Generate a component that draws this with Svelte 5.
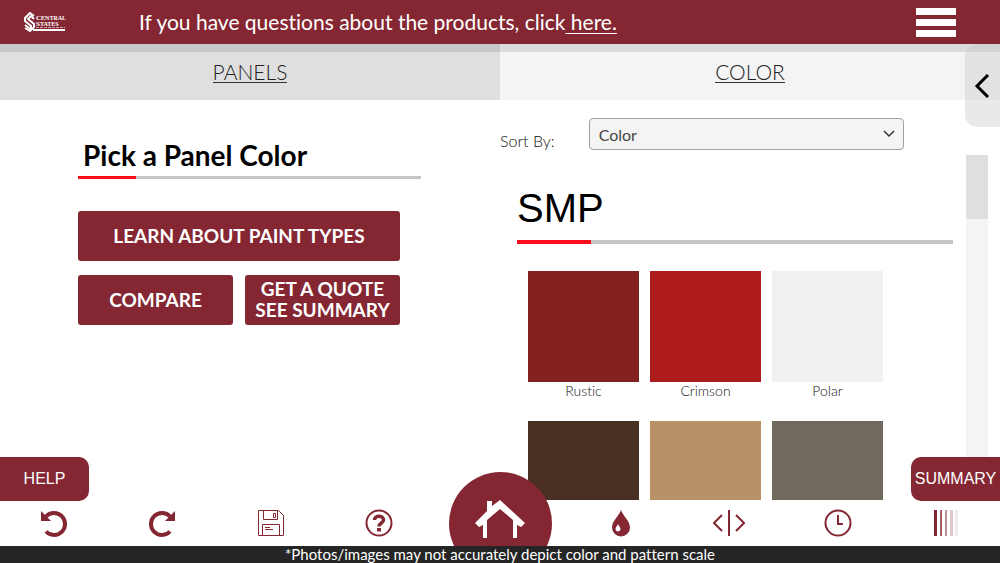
<script>
	const swatches = [
		{ id: "rustic", caption: "Rustic", color: "#832120" },
		{ id: "crimson", caption: "Crimson", color: "#ad1c1b" },
		{ id: "polar", caption: "Polar", color: "#f1f1f1" },
		{ id: "brown", color: "#493022" },
		{ id: "tan", color: "#b89167" },
		{ id: "taupe", color: "#71695e" },
	];

	let sortBy = $state("Color");
	let tab = $state("color");
</script>

<div class="page">
	<header>
		<svg class="logo" viewBox="0 0 42 20" role="img" aria-label="Central States">
			<g fill="none" stroke="#fff" stroke-width="2">
				<path d="M10 4 6 1 1 6v3l6 5v2l-1 1-5-4" />
				<path d="M10 7 7 4 4 7l6 5v3l-4 4-5-3" />
			</g>
			<text x="12" y="8" class="logo-name">C<tspan class="small">ENTRAL</tspan></text>
			<text x="12" y="14" class="logo-name">S<tspan class="small">TATES</tspan></text>
			<path d="M12 15.5h29" stroke="#fff" stroke-opacity=".6" stroke-dasharray="3 1" />
			<path d="M9 18h32" stroke="#fff" stroke-width="2" />
		</svg>
		<p>If you have questions about the products, click<a href="#contact">&nbsp;here.</a></p>
		<button class="menu" aria-label="Menu">
			<span></span>
			<span></span>
			<span></span>
		</button>
	</header>

	<nav class="tabs">
		<button aria-pressed={tab === "panels"} onclick={() => (tab = "panels")}><span>PANELS</span></button>
		<button class="light" aria-pressed={tab === "color"} onclick={() => (tab = "color")}><span>COLOR</span></button>
		<button class="drawer" aria-label="Open drawer">
			<svg width="16" height="24" viewBox="0 0 16 24">
				<path d="M14 1 3 12l11 11" fill="none" stroke="#000" stroke-width="3" />
			</svg>
		</button>
	</nav>

	<main>
		<section class="intro">
			<h1>Pick a Panel Color</h1>
			<div class="rule"></div>
			<div class="actions">
				<button class="wide">LEARN ABOUT PAINT TYPES</button>
				<button>COMPARE</button>
				<button>GET A QUOTE<br />SEE SUMMARY</button>
			</div>
		</section>

		<section class="picker">
			<div class="sort">
				<label for="sort">Sort By:</label>
				<div class="select">
					<select id="sort" bind:value={sortBy}>
						<option>Color</option>
						<option>Name</option>
					</select>
					<svg width="12" height="8" viewBox="0 0 12 8">
						<path d="m1 1 5 5 5-5" fill="none" stroke="#333" stroke-width="1.5" />
					</svg>
				</div>
			</div>
			<div class="scroller">
				<div class="list">
					<h2>SMP</h2>
					<div class="rule thick"></div>
					<div class="swatches">
						{#each swatches as swatch (swatch.id)}
							<button class="swatch" aria-label={swatch.id}>
								<span class="chip" style:background-color={swatch.color}></span>
								{#if swatch.caption}
									{swatch.caption}
								{/if}
							</button>
						{/each}
					</div>
				</div>
				<div class="track"><div class="thumb"></div></div>
			</div>
		</section>

		<button class="side help">HELP</button>
		<button class="side summary">SUMMARY</button>
	</main>

	<footer>
		<div class="toolbar">
			<button aria-label="Undo">
				<svg width="28" height="28" viewBox="0 0 28 28">
					<path d="M6 7.500A11 11 0 1 1 6 22.500" fill="none" stroke="#842733" stroke-width="4" />
					<path d="M1 2v10h10z" fill="#842733" />
				</svg>
			</button>
			<button aria-label="Redo">
				<svg class="flip" width="28" height="28" viewBox="0 0 28 28">
					<path d="M6 7.500A11 11 0 1 1 6 22.500" fill="none" stroke="#842733" stroke-width="4" />
					<path d="M1 2v10h10z" fill="#842733" />
				</svg>
			</button>
			<button aria-label="Save">
				<svg width="26" height="26" viewBox="0 0 26 26" fill="none" stroke="#842733">
					<path d="M.5.5h20l5 5v20H.5zM5.500 1v8.500h14V1M4.500 25V14.500h17V25" />
					<path d="M15.500 3.500h2v4h-2zM7 17.500h5M7 19.500h8" />
				</svg>
			</button>
			<button aria-label="Questions">
				<svg width="28" height="28" viewBox="0 0 28 28" fill="none" stroke="#842733">
					<circle cx="14" cy="14" r="12.500" stroke-width="2" />
					<path d="M9.500 11c0-5 9-5 9 0 0 3-4.500 3-4.500 6.500" stroke-width="3.500" />
					<path d="M14 19v3.500" stroke-width="4" />
				</svg>
			</button>
			<button class="home" aria-label="Home">
				<svg width="50" height="40" viewBox="0 0 50 40" fill="#fff">
					<path d="M12 12V2h5v5l8-6 25 23-4 4-4-2v13h-4V21L25 10 12 21v18H8V26l-4 2-4-4z" />
				</svg>
			</button>
			<button aria-label="Finish">
				<svg width="20" height="28" viewBox="0 0 20 28">
					<path d="M10 1c2 6 9 11 9 17.500a9 9 0 0 1-18 0C1 12 8 7 10 1z" fill="#842733" />
					<path d="M7 15c.5 2 2.500 3 2.500 5a2.500 2.500 0 0 1-5 0c0-2 2-3 2.500-5z" fill="#fff" />
				</svg>
			</button>
			<button aria-label="Compare views">
				<svg width="32" height="28" viewBox="0 0 32 28" fill="none" stroke="#842733" stroke-width="2">
					<path d="m9 6-8 8 8 8M16 1v26M23 6l8 8-8 8" />
				</svg>
			</button>
			<button aria-label="History">
				<svg width="28" height="28" viewBox="0 0 28 28" fill="none" stroke="#842733" stroke-width="2">
					<circle cx="14" cy="14" r="12.500" />
					<path d="M14 6v9h5" />
				</svg>
			</button>
			<button aria-label="Opacity">
				<svg width="26" height="28" viewBox="0 0 26 28" fill="#842733">
					<path d="M1 1h3v26H1z" />
					<path d="M7 1h2v26H7z" opacity=".75" />
					<path d="M12 1h2v26h-2z" opacity=".5" />
					<path d="M17 1h3v26h-3z" opacity=".25" />
					<path d="M22 1h3v26h-3z" opacity=".1" />
				</svg>
			</button>
		</div>
		<p class="disclaimer">*Photos/images may not accurately depict color and pattern scale</p>
	</footer>
</div>

<style>
	:global(body) {
		margin: 0;
	}

	* {
		box-sizing: border-box;
		font-variant-ligatures: none;
	}

	.page {
		height: 100vh;
		display: flex;
		flex-direction: column;
		overflow: hidden;
		background-color: #fff;
		color: #222;
		font-family: Lato, sans-serif;
	}

	button {
		padding: 0;
		border: none;
		background-color: transparent;
		color: inherit;
		font-family: inherit;
		cursor: pointer;
	}

	svg {
		display: block;
	}

	h1, h2, p {
		margin: 0;
	}

	header {
		height: 44px;
		flex: none;
		display: flex;
		align-items: center;
		padding: 0 44px 0 24px;
		background-color: #842733;
		color: #fff;
	}

	header p {
		flex: 1;
		margin-left: 73px;
		padding-bottom: 2px;
		font-size: 21px;
	}

	header a {
		color: inherit;
		text-decoration-thickness: 1px;
		text-underline-offset: 3px;
	}

	.logo {
		width: 42px;
		height: 20px;
	}

	.logo-name {
		fill: #fff;
		font: bold 7px "Liberation Serif", serif;
	}

	.small {
		font-size: 6px;
	}

	.menu {
		width: 40px;
		display: grid;
		gap: 4px;
	}

	.menu span {
		height: 7px;
		background-color: #fff;
	}

	.tabs {
		position: relative;
		flex: none;
		display: grid;
		grid-template-columns: 1fr 1fr;
	}

	.tabs button {
		height: 56px;
		padding-bottom: 10px;
		border-top: 8px solid #c7c8c8;
		background-color: #dfdfdf;
		font-size: 21px;
		font-weight: 300;
	}

	.tabs .light {
		border-color: #dadbdb;
		background-color: #f4f4f4;
	}

	.tabs span {
		display: inline-block;
		border-bottom: 1px solid #333;
		line-height: 21px;
	}

	.tabs .drawer {
		position: absolute;
		top: 0;
		right: 0;
		z-index: 1;
		width: 35px;
		height: 83px;
		display: flex;
		align-items: center;
		padding: 0 0 0 9px;
		border: none;
		border-radius: 12px 0 0 12px;
		background-color: rgba(200, 200, 200, 0.4);
	}

	main {
		position: relative;
		flex: 1;
		min-height: 0;
		display: grid;
		grid-template-columns: 1fr 1fr;
		grid-template-rows: 100%;
	}

	.intro {
		padding: 38px 79px 0 78px;
	}

	h1 {
		padding-left: 5px;
		color: #000;
		font-size: 28px;
		font-weight: 700;
		line-height: 34px;
	}

	.rule {
		height: 3px;
		margin-top: 4px;
		background: linear-gradient(to right, #fc0d1b 17%, #c6c6c6 17%);
	}

	.actions {
		display: grid;
		grid-template-columns: 1fr 1fr;
		gap: 14px 12px;
		margin: 32px 21px 0 0;
	}

	.actions button {
		height: 50px;
		padding-bottom: 2px;
		border-radius: 3px;
		background-color: #842733;
		color: #fff;
		font-size: 19px;
		font-weight: 700;
		line-height: 21px;
	}

	.actions .wide {
		grid-column: 1 / -1;
	}

	.picker {
		display: flex;
		flex-direction: column;
		min-height: 0;
		padding-top: 18px;
	}

	.sort {
		display: flex;
		align-items: center;
		gap: 34px;
		padding-right: 96px;
	}

	.sort label {
		padding-top: 12px;
		font-size: 16px;
	}

	.select {
		position: relative;
		flex: 1;
	}

	select {
		display: block;
		width: 100%;
		height: 32px;
		padding: 0 9px;
		appearance: none;
		border: 1px solid #a0a0a0;
		border-radius: 4px;
		background-color: #f4f4f4;
		color: #444;
		font: 16px Lato, sans-serif;
	}

	.select svg {
		position: absolute;
		top: 12px;
		right: 9px;
		pointer-events: none;
	}

	.scroller {
		flex: 1;
		min-height: 0;
		display: flex;
		gap: 13px;
		margin-top: 5px;
		padding: 0 12px 0 17px;
		overflow: hidden;
	}

	.list {
		flex: 1;
	}

	h2 {
		padding: 30px 0 5px;
		color: #000;
		font: 40px/46px "Liberation Sans", sans-serif;
	}

	.rule.thick {
		height: 4px;
	}

	.swatches {
		display: grid;
		grid-template-columns: repeat(3, 1fr);
		align-items: start;
		gap: 22px 11px;
		margin: 27px 70px 0 11px;
	}

	.swatch {
		font-size: 14px;
		line-height: 17px;
		color: #333;
	}

	.chip {
		display: block;
		aspect-ratio: 1;
	}

	.track {
		width: 22px;
		background-color: #f4f4f4;
	}

	.thumb {
		height: 64px;
		background-color: #dfdfdf;
	}

	.side {
		position: absolute;
		bottom: -1px;
		width: 89px;
		height: 44px;
		background-color: #842733;
		color: #fff;
		font: 16px "Liberation Sans", sans-serif;
	}

	.help {
		left: 0;
		border-radius: 0 10px 10px 0;
	}

	.summary {
		right: 0;
		border-radius: 10px 0 0 10px;
	}

	footer {
		position: relative;
		flex: none;
	}

	.toolbar {
		height: 46px;
		display: grid;
		grid-template-columns: repeat(4, 1fr) 134px repeat(4, 1fr);
		grid-template-rows: 100%;
		justify-items: center;
		align-items: center;
	}

	.flip {
		transform: scaleX(-1);
	}

	.home {
		width: 103px;
		height: 103px;
		display: flex;
		align-items: center;
		justify-content: center;
		padding-bottom: 8px;
		border-radius: 50%;
		background-color: #842733;
	}

	.disclaimer {
		position: relative;
		height: 17px;
		background-color: #252525;
		color: #fff;
		font-size: 15px;
		line-height: 17px;
		text-align: center;
	}

	.sort label,
	.swatch {
		color: #111;
		font-weight: 300;
	}
</style>
